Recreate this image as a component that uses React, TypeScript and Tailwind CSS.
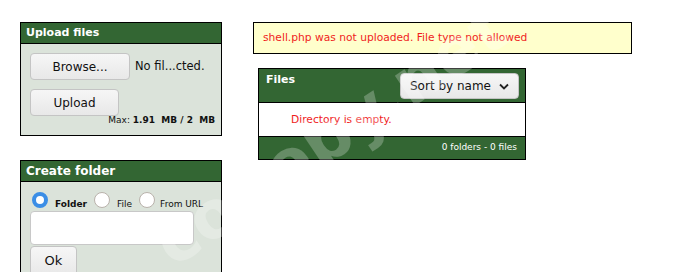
import React from 'react';

const FONT = { fontFamily: '"DejaVu Sans", Verdana, sans-serif' };

const Btn: React.FC<{ className?: string; children: React.ReactNode }> = ({ className = '', children }) => (
  <button
    className={`rounded-[4px] border border-[#c4c4c4] bg-gradient-to-b from-[#f6f6f6] to-[#e8e8e8] text-[#111] ${className}`}
  >
    {children}
  </button>
);

const Radio: React.FC<{ checked?: boolean }> = ({ checked }) =>
  checked ? (
    <span className="inline-block shrink-0 w-[16px] h-[16px] rounded-full border-[4px] border-[#3b8ee6] bg-white" />
  ) : (
    <span className="inline-block shrink-0 w-[16px] h-[16px] rounded-full border border-[#b9b2ab] bg-white" />
  );

const Panel: React.FC<{ title: string; titleSize: string; className?: string; children: React.ReactNode }> = ({
  title,
  titleSize,
  className = '',
  children,
}) => (
  <div className={`w-[202px] border border-black bg-[#dbe3da] ${className}`}>
    <div className={`h-[21px] bg-[#336633] border-b border-black px-[5px] flex items-center font-bold text-white ${titleSize}`}>
      {title}
    </div>
    {children}
  </div>
);

export default function App() {
  return (
    <div className="relative w-[682px] h-[272px] overflow-hidden bg-white" style={FONT}>
      <div className="flex pt-[22px] pl-[20px] gap-[31px]">
        {/* Left column */}
        <div className="flex flex-col gap-[24px]">
          <Panel title="Upload files" titleSize="text-[11px]" className="h-[114px]">
            <div className="pl-[9px] pt-[9px] pr-[6px]">
              <div className="flex items-center gap-[5px]">
                <Btn className="w-[100px] h-[27px] text-[12px]">Browse...</Btn>
                <span className="text-[11.5px] text-[#111]">No fil...cted.</span>
              </div>
              <Btn className="w-[89px] h-[27px] mt-[9px] text-[12px]">Upload</Btn>
              <div className="text-right text-[9px] text-[#111] -mt-[2px] leading-[12px]">
                Max: <b>1.91&nbsp; MB / 2&nbsp; MB</b>
              </div>
            </div>
          </Panel>

          <Panel title="Create folder" titleSize="text-[12px]" className="h-[140px]">
            <div className="pl-[9px] pt-[10px]">
              <div className="flex items-end text-[9px] text-[#111] pl-[2px]">
                <Radio checked />
                <span className="font-bold ml-[7px] mr-[7px] leading-[10px] -mb-[1px]">Folder</span>
                <Radio />
                <span className="ml-[7px] mr-[7px] leading-[10px] -mb-[1px]">File</span>
                <Radio />
                <span className="ml-[5px] leading-[10px] -mb-[1px]">From URL</span>
              </div>
              <div className="mt-[3px] w-[164px] h-[34px] rounded-[4px] border border-[#c8c8c8] bg-white" />
              <Btn className="w-[47px] h-[30px] mt-[1px] text-[13px]">Ok</Btn>
            </div>
          </Panel>
        </div>

        {/* Right column */}
        <div className="flex flex-col">
          <div className="w-[379px] h-[32px] border border-black bg-[#ffffcc] flex items-center pl-[9px] text-[10.7px] text-[#f01d1d]">
            shell.php was not uploaded. File type not allowed
          </div>

          <div className="ml-[5px] mt-[14px] w-[268px] border border-black">
            <div className="h-[34px] bg-[#336633] border-b border-black flex justify-between pl-[7px] pr-[6px]">
              <span className="text-[11px] font-bold text-white pt-[3px]">Files</span>
              <Btn className="mt-[4px] w-[119px] h-[26px] flex items-center justify-center gap-[8px] text-[12px]">
                Sort by name
                <svg width="10" height="7" viewBox="0 0 10 7" fill="none">
                  <path d="M1 1.5 L5 5.5 L9 1.5" stroke="#222" strokeWidth="1.8" />
                </svg>
              </Btn>
            </div>
            <div className="h-[34px] bg-white border-b border-black flex items-center pl-[32px] pt-[2px] text-[10.7px] text-[#f01d1d]">
              Directory is empty.
            </div>
            <div className="h-[22px] bg-[#336633] flex items-center justify-end pr-[8px] text-[9px] text-white">
              0 folders - 0 files
            </div>
          </div>
        </div>
      </div>

      {/* watermark */}
      <div
        aria-hidden
        className="absolute left-[123px] top-[97px] w-[415px] text-center text-[66px] leading-[77px] font-bold text-white/25 pointer-events-none select-none -rotate-[34deg] whitespace-nowrap"
      >
        codeby.net
      </div>
    </div>
  );
}
